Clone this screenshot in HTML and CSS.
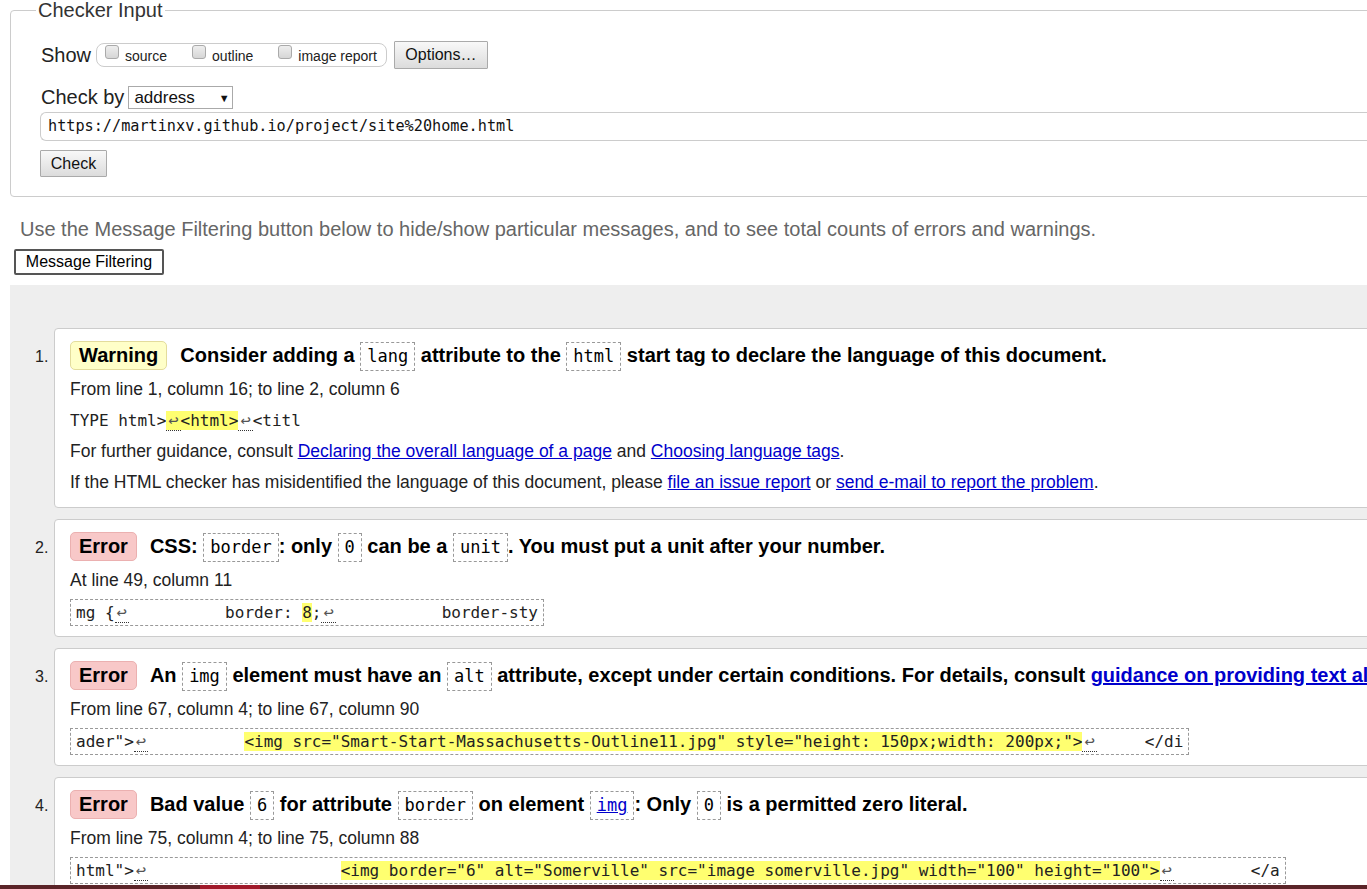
FILE: index.html
```html
<!DOCTYPE html>
<html>
<head>
<meta charset="utf-8">
<title>Checker</title>
<link rel="stylesheet" href="styles.css">
</head>
<body>
<div class="page">
  <fieldset class="checker">
    <legend>Checker Input</legend>
    <div class="row show-row">
      <span class="lbl">Show</span>
      <span class="opts">
        <label class="opt"><span class="cb"></span>source</label>
        <label class="opt"><span class="cb"></span>outline</label>
        <label class="opt"><span class="cb"></span>image report</label>
      </span>
      <button class="btn options">Options…</button>
    </div>
    <div class="row by-row">
      <span class="lbl">Check by</span>
      <span class="select">address<span class="arrow">▼</span></span>
    </div>
    <div class="url">https://martinxv.github.io/project/site%20home.html</div>
    <button class="btn check">Check</button>
  </fieldset>

  <p class="hint">Use the Message Filtering button below to hide/show particular messages, and to see total counts of errors and warnings.</p>
  <button class="filter">Message Filtering</button>

  <div class="results">
    <div class="item">
      <span class="num">1.</span>
      <div class="card">
        <div class="head"><span class="badge warn">Warning</span><span class="msg">Consider adding a <code class="ic">lang</code> attribute to the <code class="ic">html</code> start tag to declare the language of this document.</span></div>
        <div class="line">From line 1, column 16; to line 2, column 6</div>
        <div class="line"><span class="ext">TYPE html&gt;<mark><abbr>↩</abbr>&lt;html&gt;</mark><abbr>↩</abbr>&lt;titl</span></div>
        <div class="line">For further guidance, consult <a href="#">Declaring the overall language of a page</a> and <a href="#">Choosing language tags</a>.</div>
        <div class="line">If the HTML checker has misidentified the language of this document, please <a href="#">file an issue report</a> or <a href="#">send e-mail to report the problem</a>.</div>
      </div>
    </div>

    <div class="item">
      <span class="num">2.</span>
      <div class="card">
        <div class="head"><span class="badge err">Error</span><span class="msg">CSS: <code class="ic">border</code>: only <code class="ic">0</code> can be a <code class="ic">unit</code>. You must put a unit after your number.</span></div>
        <div class="line">At line 49, column 11</div>
        <div class="line"><span class="ext box">mg {<abbr>↩</abbr>          border: <mark>8</mark>;<abbr>↩</abbr>           border-sty</span></div>
      </div>
    </div>

    <div class="item">
      <span class="num">3.</span>
      <div class="card">
        <div class="head"><span class="badge err">Error</span><span class="msg">An <code class="ic">img</code> element must have an <code class="ic">alt</code> attribute, except under certain conditions. For details, consult <a href="#">guidance on providing text alternatives for images</a>.</span></div>
        <div class="line">From line 67, column 4; to line 67, column 90</div>
        <div class="line"><span class="ext box">ader"&gt;<abbr>↩</abbr>          <mark>&lt;img src="Smart-Start-Massachusetts-Outline11.jpg" style="height: 150px;width: 200px;"&gt;</mark><abbr>↩</abbr>     &lt;/di</span></div>
      </div>
    </div>

    <div class="item">
      <span class="num">4.</span>
      <div class="card">
        <div class="head"><span class="badge err">Error</span><span class="msg">Bad value <code class="ic">6</code> for attribute <code class="ic">border</code> on element <code class="ic"><a href="#">img</a></code>: Only <code class="ic">0</code> is a permitted zero literal.</span></div>
        <div class="line">From line 75, column 4; to line 75, column 88</div>
        <div class="line"><span class="ext box">html"&gt;<abbr>↩</abbr>                    <mark>&lt;img border="6" alt="Somerville" src="image somerville.jpg" width="100" height="100"&gt;</mark><abbr>↩</abbr>        &lt;/a</span></div>
      </div>
    </div>
  </div>
</div>
<div class="taskbar"><span class="tb-active"></span></div>
</body>
</html>
```
FILE: styles.css
```css
html, body {
  margin: 0;
  padding: 0;
  overflow: hidden;
  background: #fff;
}
body {
  font-family: "Liberation Sans", Arial, sans-serif;
  color: #000;
  height: 889px;
}
.page {
  width: 1500px;
  padding: 0 0 0 10px;
}
.checker {
  margin: 0;
  border: 1px solid #ccc;
  border-radius: 4px;
  padding: 24px 0 19px 30px;
  min-width: 0;
}
.checker legend {
  font-size: 20px;
  color: #333;
  padding: 0 2px;
  margin-left: -5px;
  line-height: 20px;
}
.row {
  display: flex;
  align-items: center;
}
.lbl {
  font-size: 20px;
  color: #222;
}
.show-row {
  height: 28px;
  margin-top: -3px;
}
.opts {
  display: flex;
  align-items: center;
  margin-left: 5px;
  height: 22px;
  border: 1px solid #ccc;
  border-radius: 8px;
  padding: 0 9px 0 8px;
}
.opt {
  display: flex;
  align-items: center;
  font-size: 14px;
  color: #222;
  margin-right: 25px;
  position: relative;
  top: 1px;
}
.opt:last-child { margin-right: 0; }
.cb {
  width: 12px;
  height: 12px;
  border: 1px solid #aaa;
  border-radius: 3px;
  background: linear-gradient(#eee, #d6d6d6);
  margin-right: 6px;
  position: relative;
  top: -4px;
}
.btn {
  font-family: "Liberation Sans", Arial, sans-serif;
  font-size: 16px;
  color: #111;
  border: 1px solid #aaa;
  border-radius: 1px;
  background: linear-gradient(#f8f8f8, #dcdcdc);
  padding: 0 10px;
}
.options {
  margin-left: 7px;
  height: 28px;
  width: 94px;
}
.by-row {
  margin-top: 17px;
  height: 23px;
}
.select {
  margin-left: 4px;
  border: 1px solid #aaa;
  font-size: 17px;
  color: #111;
  display: flex;
  align-items: center;
  padding-left: 5px;
  box-sizing: border-box;
  width: 105px;
  height: 23px;
}
.arrow {
  font-size: 11px;
  margin-left: 24px;
}
.url {
  margin-top: 3px;
  margin-left: -1px;
  height: 27px;
  border: 1px solid #ccc;
  border-right: none;
  border-radius: 6px 0 0 6px;
  font-family: "DejaVu Sans Mono", monospace;
  font-size: 15.2px;
  line-height: 27px;
  padding-left: 7px;
  color: #111;
}
.check {
  margin-top: 9px;
  margin-left: -1px;
  height: 27px;
  width: 67px;
  padding: 0;
}
.hint {
  margin: 14px 0 0 10px;
  font-size: 20px;
  color: #666;
  line-height: 36px;
}
.filter {
  display: block;
  margin: 2px 0 0 4px;
  font-family: "Liberation Sans", Arial, sans-serif;
  font-size: 16px;
  color: #000;
  background: #fff;
  border: 2px solid #555;
  border-radius: 2px;
  height: 26px;
  width: 150px;
  padding: 0;
}
.results {
  margin-top: 10px;
  background: #eee;
  padding: 43px 0 20px 0;
}
.item {
  display: flex;
  align-items: flex-start;
  margin-bottom: 11px;
}
.num {
  width: 44px;
  flex: none;
  box-sizing: border-box;
  padding-left: 25px;
  padding-top: 19px;
  font-size: 16px;
  line-height: 20px;
  color: #222;
}
.card {
  flex: 1;
  background: #fff;
  border: 1px solid #ccc;
  border-radius: 4px;
  padding: 12px 15px 9px 15px;
}
.head {
  height: 33px;
  display: flex;
  align-items: flex-start;
  white-space: nowrap;
}
.badge {
  font-weight: bold;
  font-size: 20px;
  line-height: 27px;
  padding: 0 8px;
  border-radius: 5px;
  margin-right: 13px;
  flex: none;
}
.warn {
  background: #ffffc8;
  border: 1px solid #e3dc9c;
}
.err {
  background: #f8c8c8;
  border: 1px solid #ebb0b0;
}
.msg {
  font-weight: bold;
  font-size: 20px;
  line-height: 29px;
}
.ic {
  font-family: "DejaVu Sans Mono", monospace;
  font-weight: normal;
  font-size: 17px;
  border: 1px dashed #999;
  padding: 3px 6px 4px;
}
.line {
  height: 31px;
  line-height: 31px;
  font-size: 17.5px;
  color: #222;
  white-space: nowrap;
}
.ext {
  font-family: "DejaVu Sans Mono", monospace;
  font-size: 16px;
  white-space: pre;
  color: #222;
}
.ext.box {
  display: inline-block;
  border: 1px dashed #999;
  line-height: 25px;
  padding: 0 5px;
  vertical-align: middle;
}
mark {
  background: #ffff70;
  color: inherit;
}
abbr {
  text-decoration: none;
  border-bottom: 1px dotted #333;
  color: #555;
  font-size: 17px;
  padding: 0 2px;
}
a {
  color: #0000cc;
}
.taskbar {
  position: fixed;
  left: 0;
  right: 0;
  bottom: 0;
  height: 4px;
  background: #5b2428;
}
.tb-active {
  display: block;
  margin-left: 200px;
  width: 60px;
  height: 4px;
  background: #a01a2a;
}
```
